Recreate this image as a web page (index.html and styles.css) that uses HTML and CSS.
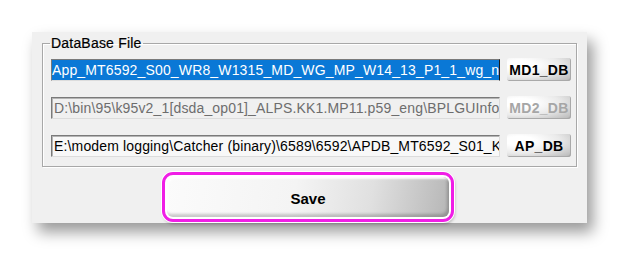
FILE: index.html
```html
<!DOCTYPE html>
<html lang="en">
<head>
  <meta charset="UTF-8" />
  <title>DataBase File</title>
  <link rel="stylesheet" href="styles.css">
</head>
<body>
  <div class="window">
    <fieldset class="group">
      <legend>DataBase File</legend>

      <div class="row">
        <div class="field selected"><span>App_MT6592_S00_WR8_W1315_MD_WG_MP_W14_13_P1_1_wg_n</span></div>
        <button class="db-btn">MD1_DB</button>
      </div>

      <div class="row">
        <div class="field disabled"><span>D:\bin\95\k95v2_1[dsda_op01]_ALPS.KK1.MP11.p59_eng\BPLGUInfo</span></div>
        <button class="db-btn" disabled>MD2_DB</button>
      </div>

      <div class="row">
        <div class="field"><span>E:\modem logging\Catcher (binary)\6589\6592\APDB_MT6592_S01_K</span></div>
        <button class="db-btn">AP_DB</button>
      </div>
    </fieldset>

    <div class="save-wrap">
      <div class="save-ring">
        <button class="save-btn">Save</button>
      </div>
    </div>
  </div>
</body>
</html>
```

FILE: styles.css
```css
html, body {
  margin: 0;
  padding: 0;
  background: #ffffff;
  font-family: 'Liberation Sans', Arial, sans-serif;
}

body {
  padding: 32px 0 0 32px;
  height: 257px;
  box-sizing: border-box;
  overflow: hidden;
}

.window {
  width: 555px;
  height: 191px;
  background: #f0f0f0;
  box-shadow: 6px 9px 14px rgba(0, 0, 0, 0.4);
  padding: 4px 0 0 10px;
  box-sizing: border-box;
  position: relative;
}

.group {
  margin: 0;
  width: 535px;
  height: 131px;
  box-sizing: border-box;
  border: 1px solid #a8a8a8;
  box-shadow: inset 1px 1px 0 #ffffff, 1px 1px 0 #ffffff;
  padding: 7px 0 0 8px;
  display: flex;
  flex-direction: column;
  gap: 15px;
}

.group legend {
  padding: 0 1px;
  margin-left: -1px;
  font-size: 14px;
  color: #000;
  line-height: 15px;
  letter-spacing: 0.2px;
  -webkit-text-stroke: 0.2px #000;
}

.row {
  display: flex;
  align-items: center;
  gap: 7px;
  height: 23px;
}

.field {
  width: 449px;
  height: 22px;
  box-sizing: border-box;
  border: 1px solid;
  border-color: #7a7a7a #dcdcdc #dcdcdc #7a7a7a;
  box-shadow: inset 1px 1px 0 #b4b4b4;
  background: #f8f8f8;
  overflow: hidden;
  white-space: nowrap;
  font-size: 14px;
  letter-spacing: 0.15px;
  line-height: 20px;
  padding: 0 2px;
  color: #000;
}

.field.selected span {
  display: inline-block;
  background: #0a78d6;
  color: #fff;
  margin-left: -4px;
  padding-left: 2px;
  width: 460px;
}

.field.selected {
  background: #0a78d6;
  border-right-color: #1a1a1a;
}

.field.disabled {
  background: #f0f0f0;
  color: #6d6d6d;
}

.db-btn {
  width: 64px;
  height: 23px;
  border: none;
  border-radius: 3px;
  background: radial-gradient(ellipse at 20% 30%, #ffffff 20%, #eaeaea 55%, #b5b5b5 100%);
  box-shadow: inset -1px -1px 0 #a9a9a9;
  font-family: 'Liberation Sans', Arial, sans-serif;
  font-size: 14px;
  font-weight: bold;
  color: #000;
  padding: 0;
  letter-spacing: 0.3px;
}

.db-btn:disabled {
  color: #a6a6a6;
}

.save-wrap {
  display: flex;
  padding: 5px 0 0 120px;
}

.save-ring {
  width: 292px;
  height: 50px;
  box-sizing: border-box;
  border: 3px solid #f01ee6;
  border-radius: 11px;
  box-shadow: 0 0 0 1px #ffffff, 1px 2px 3px rgba(0, 0, 0, 0.25);
  padding: 2px;
  background: #ffffff;
}

.save-btn {
  width: 100%;
  height: 100%;
  border: none;
  border-radius: 6px;
  background: linear-gradient(100deg, #fbfbfb 0%, #f4f4f4 45%, #e0e0e0 72%, #b6b6b6 100%);
  box-shadow: inset -2px -3px 3px rgba(0, 0, 0, 0.2), inset 2px 2px 2px rgba(255, 255, 255, 0.9);
  font-family: 'Liberation Sans', Arial, sans-serif;
  font-size: 15px;
  font-weight: bold;
  color: #000;
  padding: 2px 0 0 0;
}
```
